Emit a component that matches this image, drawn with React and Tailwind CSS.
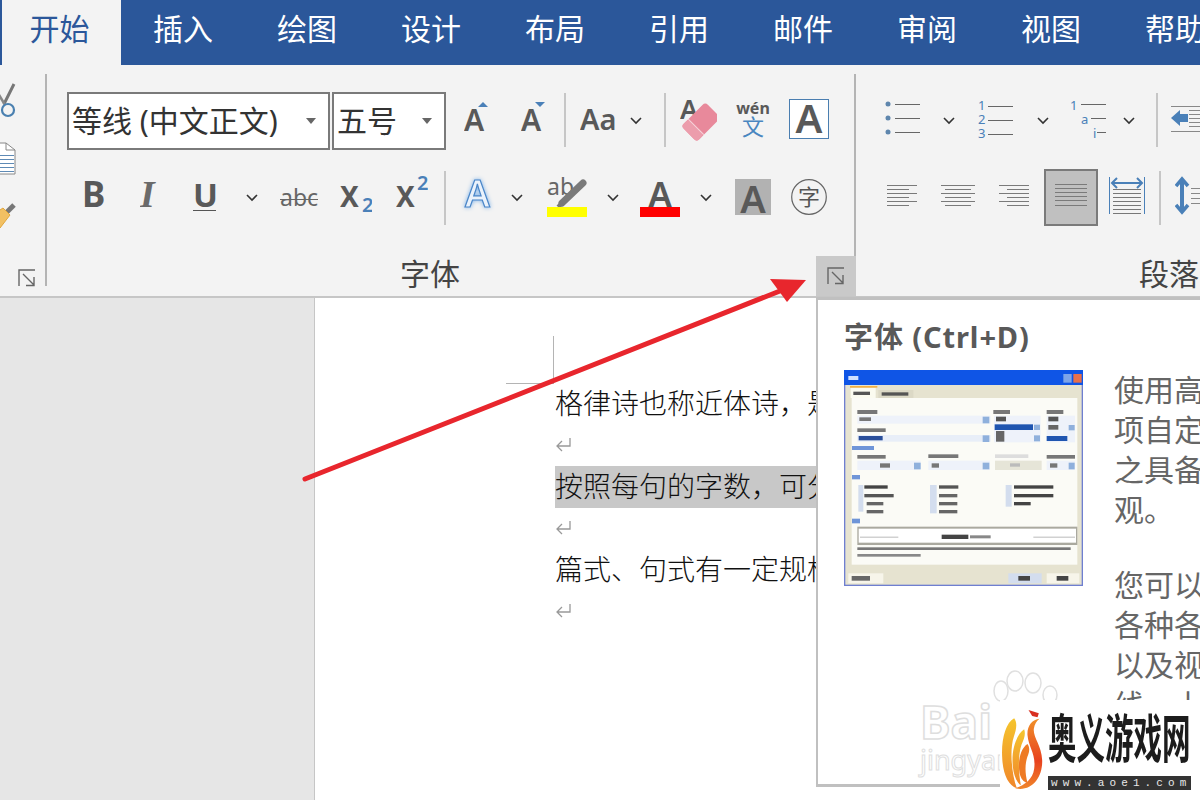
import React from "react";

const TABS = ["插入", "绘图", "设计", "布局", "引用", "邮件", "审阅", "视图", "帮助"];
const GRAY = "#595959";
const BLUE = "#4a80b8";

// thumbnail of the old font dialog, coordinates are in a 717x648 box
const THUMB_RECTS = [
  [42, 30, 717, 648, "#6f7fd0"],
  [46, 34, 709, 640, "#e6e3d0"],
  [42, 30, 717, 45, "#0f55e6"],
  [700, 42, 25, 26, "#7ea4e8"],
  [730, 42, 25, 26, "#e8704a"],
  [55, 48, 30, 12, "#cfe0ff"],
  [62, 84, 75, 30, "#fbfbf0"],
  [60, 78, 82, 5, "#f5b040"],
  [145, 90, 105, 24, "#dcd9c6"],
  [70, 95, 50, 10, "#555"],
  [155, 97, 80, 10, "#555"],
  [65, 114, 677, 500, "#fbfbf6"],
  [82, 150, 60, 12, "#777"],
  [82, 167, 400, 24, "#eef2fa"],
  [88, 172, 35, 11, "#777"],
  [82, 205, 85, 11, "#777"],
  [82, 225, 400, 20, "#e8eef8"],
  [86, 228, 72, 13, "#2a4f9a"],
  [458, 170, 20, 20, "#8fb0dc"],
  [458, 226, 20, 20, "#8fb0dc"],
  [490, 150, 50, 12, "#777"],
  [492, 167, 140, 80, "#eef2fa"],
  [498, 170, 30, 14, "#555"],
  [494, 193, 115, 17, "#1f55b0"],
  [498, 213, 25, 32, "#666"],
  [612, 194, 18, 16, "#8fb0dc"],
  [612, 226, 18, 18, "#8fb0dc"],
  [650, 150, 50, 12, "#777"],
  [650, 167, 85, 80, "#eef2fa"],
  [655, 170, 30, 14, "#555"],
  [655, 195, 30, 14, "#666"],
  [650, 228, 62, 15, "#1f55b0"],
  [716, 195, 18, 16, "#8fb0dc"],
  [66, 258, 66, 12, "#6f95d8"],
  [82, 285, 85, 11, "#777"],
  [82, 302, 190, 28, "#eef2fa"],
  [150, 310, 30, 13, "#777"],
  [252, 308, 20, 20, "#8fb0dc"],
  [295, 283, 90, 11, "#777"],
  [295, 302, 185, 28, "#eef2fa"],
  [305, 310, 22, 13, "#777"],
  [458, 308, 20, 20, "#8fb0dc"],
  [495, 283, 100, 11, "#ddd"],
  [495, 302, 140, 28, "#e6e5d8"],
  [540, 310, 30, 10, "#bbb"],
  [650, 285, 85, 11, "#777"],
  [650, 302, 85, 28, "#eef2fa"],
  [660, 310, 22, 13, "#777"],
  [716, 308, 18, 20, "#8fb0dc"],
  [66, 345, 24, 13, "#6f95d8"],
  [85, 375, 15, 80, "#d3ddee"],
  [103, 376, 70, 10, "#444"],
  [103, 402, 88, 10, "#555"],
  [110, 426, 50, 10, "#666"],
  [110, 450, 50, 10, "#666"],
  [300, 375, 20, 85, "#d3ddee"],
  [327, 376, 58, 10, "#555"],
  [327, 402, 55, 10, "#666"],
  [327, 426, 55, 10, "#666"],
  [327, 450, 55, 10, "#666"],
  [527, 375, 18, 65, "#d3ddee"],
  [552, 376, 118, 10, "#444"],
  [552, 402, 118, 10, "#444"],
  [552, 426, 50, 10, "#444"],
  [66, 476, 24, 14, "#6f95d8"],
  [82, 500, 660, 55, "#aaa99f"],
  [86, 506, 652, 42, "#fff"],
  [90, 530, 115, 3, "#bbb"],
  [610, 530, 125, 3, "#bbb"],
  [335, 524, 80, 13, "#444"],
  [420, 526, 62, 9, "#888"],
  [82, 562, 640, 8, "#777"],
  [82, 582, 190, 8, "#888"],
  [55, 640, 105, 30, "#f7f5ea"],
  [65, 648, 55, 14, "#666"],
  [535, 640, 100, 30, "#d3ddee"],
  [565, 648, 35, 14, "#444"],
  [650, 640, 98, 30, "#f7f5ea"],
  [680, 648, 35, 14, "#444"],
];

function Chevron({ y = 29 }) {
  return (
    <svg width="12" height="60" className="shrink-0 self-start block">
      <path d={`M1 ${y - 3}L6 ${y + 2}L11 ${y - 3}`} fill="none" stroke="#333" strokeWidth="1.6" />
    </svg>
  );
}

function Launcher() {
  return (
    <svg width="18" height="18" viewBox="0 0 18 18" className="block">
      <path d="M1 17V1H17M5 5L16 16M16 8V16.5H8" fill="none" stroke="#666" strokeWidth="1.4" />
    </svg>
  );
}

function Sep({ className }) {
  return <div className={`w-[2px] h-[54px] bg-[#c6c6c6] shrink-0 ${className}`} />;
}

function Combo({ text, className }) {
  return (
    <div className={`h-[58px] border-2 border-[#7a7a7a] bg-white flex items-center justify-between pl-[3px] pr-[12px] text-[30px] leading-none text-[#333] ${className}`}>
      <span className="whitespace-nowrap">{text}</span>
      <span className="w-0 h-0 border-x-[5px] border-x-transparent border-t-[6px] border-t-[#666]" />
    </div>
  );
}

function AlignLines({ w, widths, align, x = 0, ys = [20, 24, 28, 32, 36, 40] }) {
  return ys.map((y, i) => {
    const lw = widths[i % 2];
    const x1 = align === "left" ? x : align === "right" ? x + w - lw : x + (w - lw) / 2;
    return <line key={y} x1={x1} x2={x1 + lw} y1={y + 0.5} y2={y + 0.5} stroke="#7a7a7a" />;
  });
}

function ReturnMark() {
  return (
    <svg width="16" height="16" viewBox="0 0 16 16" className="block">
      <path d="M15 1V9H2M7 4L2 9L7 14" fill="none" stroke="#999" strokeWidth="1.3" />
    </svg>
  );
}

function ClipboardGroup() {
  return (
    <div className="flex w-[47px] shrink-0">
      <div className="w-[45px] flex flex-col overflow-hidden">
        <svg width="45" height="36" className="block mt-[18px]">
          <path d="M14 1L4 21" stroke="#777" strokeWidth="3" fill="none" />
          <path d="M-2 10L5 22" stroke="#888" strokeWidth="2.5" fill="none" />
          <circle cx="8" cy="27" r="6" fill="none" stroke="#4a80b0" strokeWidth="2.2" />
        </svg>
        <svg width="45" height="36" className="block mt-[21px]">
          <path d="M-2 3H6L15 10V34H-2Z" fill="#fff" stroke="#888" />
          <path d="M6 3V10H15" fill="none" stroke="#888" />
          <path d="M0 15.5H14M0 19.5H14M0 23.5H14M0 27.5H14M0 31.5H14" stroke="#5e8ab5" />
        </svg>
        <svg width="45" height="36" className="block mt-[22px]">
          <path d="M6 15L14 7" stroke="#777" strokeWidth="5" />
          <path d="M-6 16L3 10L10 17L0 30Z" fill="#f2c063" stroke="#e0a63c" />
        </svg>
        <div className="ml-[18px] mt-[35px]">
          <Launcher />
        </div>
      </div>
      <div className="w-[2px] h-[212px] mt-[9px] bg-[#b4b4b4]" />
    </div>
  );
}

function FontGroup() {
  return (
    <div className="flex flex-col w-[809px] shrink-0">
      <div className="flex h-[191px]">
        <div className="flex-1 pt-[27px]">
          <div className="flex items-start h-[58px] pl-[20px]">
            <Combo text="等线 (中文正文)" className="w-[263px]" />
            <Combo text="五号" className="w-[114px] ml-[2px]" />
            <svg width="26" height="58" className="block ml-[18px] shrink-0">
              <text x="0" y="39" fontSize="30" fontWeight="600" fill={GRAY}>A</text>
              <path d="M14 15L19 10L24 15Z" fill={BLUE} />
            </svg>
            <svg width="26" height="58" className="block ml-[31px] shrink-0">
              <text x="0" y="39" fontSize="30" fontWeight="600" fill={GRAY}>A</text>
              <path d="M14 10L24 10L19 15Z" fill={BLUE} />
            </svg>
            <Sep className="ml-[17px] mt-[1px]" />
            <svg width="36" height="58" className="block ml-[14px] shrink-0">
              <text x="0" y="38" fontSize="29" fontWeight="600" fill={GRAY}>Aa</text>
            </svg>
            <div className="ml-[14px]"><Chevron /></div>
            <Sep className="ml-[22px] mt-[1px]" />
            <svg width="37" height="58" className="block ml-[14px] shrink-0">
              <text x="0" y="27" fontSize="27" fontWeight="600" fill={GRAY}>A</text>
              <g transform="rotate(-45 21 30)">
                <rect x="4" y="19" width="34" height="22" rx="4" fill="#e8899b" />
                <rect x="4" y="19" width="10" height="22" rx="3" fill="#ec9dac" />
                <line x1="14" x2="14" y1="19" y2="41" stroke="#fff" strokeOpacity="0.6" />
              </g>
            </svg>
            <svg width="36" height="58" className="block ml-[18px] shrink-0">
              <text x="18" y="22" fontSize="16" fontWeight="700" textAnchor="middle" fill={GRAY}>wén</text>
              <text x="18" y="43" fontSize="22" textAnchor="middle" fill="#4a86c0">文</text>
            </svg>
            <svg width="40" height="58" className="block ml-[18px] shrink-0">
              <rect x="0.5" y="7.5" width="39" height="39" fill="#fff" stroke="#4a7eb0" />
              <text x="20" y="41" fontSize="40" fontWeight="600" textAnchor="middle" fill={GRAY}>A</text>
            </svg>
          </div>
          <div className="flex items-start h-[60px] pl-[35px] mt-[15px]">
            <svg width="24" height="60" className="block shrink-0">
              <text x="0" y="42" fontSize="35" fontWeight="700" fill={GRAY}>B</text>
            </svg>
            <svg width="20" height="60" className="block ml-[34px] shrink-0">
              <text x="0" y="42" fontSize="38" fontWeight="700" fontStyle="italic" fontFamily="'Liberation Serif',serif" fill="#6a6a6a">I</text>
            </svg>
            <svg width="24" height="60" className="block ml-[33px] shrink-0">
              <text x="0" y="42" fontSize="33" fontWeight="700" fill={GRAY}>U</text>
              <rect x="0" y="45" width="23" height="1" fill="#555" />
            </svg>
            <div className="ml-[29px]"><Chevron y={33} /></div>
            <svg width="40" height="60" className="block ml-[22px] shrink-0">
              <text x="0" y="41" fontSize="23" fill="#666">abc</text>
              <line x1="0" x2="38" y1="34.5" y2="34.5" stroke="#666" />
            </svg>
            <svg width="32" height="60" className="block ml-[20px] shrink-0">
              <text x="0" y="42" fontSize="28" fontWeight="700" fill={GRAY}>X</text>
              <text x="22" y="47" fontSize="20" fontWeight="600" fill={BLUE}>2</text>
            </svg>
            <svg width="32" height="60" className="block ml-[24px] shrink-0">
              <text x="0" y="42" fontSize="28" fontWeight="700" fill={GRAY}>X</text>
              <text x="21" y="25" fontSize="20" fontWeight="600" fill={BLUE}>2</text>
            </svg>
            <Sep className="ml-[16px] mt-[6px]" />
            <svg width="25" height="60" className="block ml-[19px] shrink-0 overflow-visible drop-shadow-[0_0_2px_#7ab0e8]">
              <text x="0" y="42" fontSize="37" fontWeight="600" fill="#eaf2fb" stroke="#4a86c8" strokeWidth="1.2">A</text>
            </svg>
            <div className="ml-[21px]"><Chevron y={33} /></div>
            <svg width="40" height="60" className="block ml-[24px] shrink-0">
              <text x="0" y="30" fontSize="23" fill="#666">ab</text>
              <line x1="36" y1="18" x2="15" y2="38" stroke="#7a7a7a" strokeWidth="7" strokeLinecap="round" />
              <line x1="15" y1="38" x2="11" y2="42" stroke="#7a7a7a" strokeWidth="4" />
              <rect x="0" y="42" width="40" height="10" fill="#ffff00" />
            </svg>
            <div className="ml-[20px]"><Chevron y={33} /></div>
            <svg width="40" height="60" className="block ml-[21px] shrink-0">
              <text x="20" y="43" fontSize="36" fontWeight="600" textAnchor="middle" fill={GRAY}>A</text>
              <rect x="0" y="42" width="40" height="10" fill="#ff0000" />
            </svg>
            <div className="ml-[20px]"><Chevron y={33} /></div>
            <svg width="36" height="60" className="block ml-[23px] shrink-0">
              <rect x="0" y="14" width="36" height="36" fill="#b2b2b2" />
              <text x="18" y="48" fontSize="38" fontWeight="600" textAnchor="middle" fill={GRAY}>A</text>
            </svg>
            <svg width="36" height="60" className="block ml-[20px] shrink-0">
              <circle cx="18" cy="32" r="17.3" fill="none" stroke="#666" strokeWidth="1.2" />
              <text x="18" y="40" fontSize="22" textAnchor="middle" fill="#555">字</text>
            </svg>
          </div>
        </div>
        <div className="w-[2px] mt-[9px] bg-[#b4b4b4]" />
      </div>
      <div className="flex h-[40px]">
        <div className="ml-[353px] text-[30px] leading-[36px] text-[#444]">字体</div>
        <div className="ml-auto w-[40px] h-[40px] bg-[#c9c9c9] flex items-center justify-center">
          <Launcher />
        </div>
      </div>
    </div>
  );
}

function ParagraphGroup() {
  return (
    <div className="flex flex-col flex-1 overflow-hidden">
      <div className="h-[191px] pt-[27px]">
        <div className="flex items-start h-[58px] pl-[29px]">
          <svg width="36" height="58" className="block shrink-0">
            {[12, 26, 40].map((y) => (
              <g key={y}>
                <circle cx="3" cy={y} r="2.5" fill="#5e86ad" />
                <line x1="10" x2="35" y1={y + 0.5} y2={y + 0.5} stroke="#666" />
              </g>
            ))}
          </svg>
          <div className="ml-[22px]"><Chevron /></div>
          <svg width="36" height="58" className="block ml-[23px] shrink-0">
            {["1", "2", "3"].map((n, i) => (
              <g key={n}>
                <text x="0" y={18 + i * 14} fontSize="13" fill={BLUE}>{n}</text>
                <line x1="10" x2="35" y1={14.5 + i * 14} y2={14.5 + i * 14} stroke="#666" />
              </g>
            ))}
          </svg>
          <div className="ml-[23px]"><Chevron /></div>
          <svg width="36" height="58" className="block ml-[21px] shrink-0">
            <text x="0" y="18" fontSize="13" fill={BLUE}>1</text>
            <line x1="11" x2="36" y1="12.5" y2="12.5" stroke="#666" />
            <text x="11" y="32" fontSize="13" fill={BLUE}>a</text>
            <line x1="21" x2="36" y1="26.5" y2="26.5" stroke="#666" />
            <text x="23" y="46" fontSize="13" fill={BLUE}>i</text>
            <line x1="27" x2="36" y1="40.5" y2="40.5" stroke="#666" />
          </svg>
          <div className="ml-[17px]"><Chevron /></div>
          <Sep className="ml-[21px] mt-[1px]" />
          <svg width="30" height="58" className="block ml-[12px] shrink-0">
            <line x1="1" x2="30" y1="14.5" y2="14.5" stroke="#888" />
            <line x1="1" x2="30" y1="39.5" y2="39.5" stroke="#888" />
            <path d="M1 26L10 18V22H18V30H10V34Z" fill="#4a80b8" />
            <path d="M19 18.5H30M19 22.5H30M19 26.5H30M19 30.5H30M19 34.5H30" stroke="#888" />
          </svg>
        </div>
        <div className="flex items-start h-[60px] pl-[31px] mt-[15px]">
          <svg width="30" height="60" className="block shrink-0">
            <AlignLines w={30} widths={[30, 22]} align="left" />
          </svg>
          <svg width="34" height="60" className="block ml-[24px] shrink-0">
            <AlignLines w={34} widths={[34, 26]} align="center" />
          </svg>
          <svg width="30" height="60" className="block ml-[24px] shrink-0">
            <AlignLines w={30} widths={[30, 22]} align="right" />
          </svg>
          <svg width="54" height="62" className="block ml-[15px] shrink-0">
            <rect x="1" y="5" width="52" height="55" fill="#c0c0c0" stroke="#7a7a7a" strokeWidth="2" />
            <AlignLines w={32} widths={[32, 32]} align="left" x={11} ys={[19, 23, 27, 31, 35, 40]} />
          </svg>
          <svg width="36" height="60" className="block ml-[11px] shrink-0">
            <path d="M0.5 12V49M35.5 12V49" stroke={BLUE} />
            <path d="M3 18H33M8 13L3 18L8 23M28 13L33 18L28 23" fill="none" stroke={BLUE} strokeWidth="2" />
            <path d="M4 24.5H32M4 28.5H32M4 32.5H32M4 36.5H32M4 40.5H32M4 44.5H32M4 48.5H32" stroke="#777" />
          </svg>
          <Sep className="ml-[14px] mt-[6px]" />
          <svg width="25" height="60" className="block ml-[14px] shrink-0">
            <path d="M7 16V46" stroke={BLUE} strokeWidth="4" />
            <path d="M1 21L7 14L13 21M1 40L7 47L13 40" fill="none" stroke={BLUE} strokeWidth="3.5" />
            <path d="M16 23.5H25M16 28.5H25M16 33.5H25M16 38.5H25" stroke="#888" />
          </svg>
        </div>
      </div>
      <div className="h-[40px] pl-[283px] text-[30px] leading-[36px] text-[#444] whitespace-nowrap">段落</div>
    </div>
  );
}

function Tooltip() {
  return (
    <div className="absolute left-[816px] top-[297px] w-[384px] h-[490px] bg-white border-l-2 border-y-[3px] border-[#c0c0c0] pl-[26px] pt-[19px]">
      <div className="text-[29px] leading-[36px] font-bold text-[#595959] whitespace-nowrap tracking-[0.9px]">字体 (Ctrl+D)</div>
      <div className="flex mt-[15px]">
        <svg width="239" height="216" viewBox="42 30 717 648" className="block shrink-0 blur-[0.5px]">
          {THUMB_RECTS.map(([x, y, w, h, fill], i) => (
            <rect key={i} x={x} y={y} width={w} height={h} fill={fill} />
          ))}
        </svg>
        <div className="ml-[31px] h-[333px] overflow-hidden text-[30px] leading-[40px] text-[#666] whitespace-nowrap">
          <div>使用高级</div>
          <div>项自定义</div>
          <div>之具备所</div>
          <div>观。</div>
          <div className="mt-[35px]">您可以选</div>
          <div>各种各样</div>
          <div>以及视觉</div>
          <div>线、上标</div>
        </div>
      </div>
    </div>
  );
}

function Watermark() {
  return (
    <svg width="150" height="120" className="absolute left-[915px] top-[665px]">
      <g fill="#fff" stroke="#e0e0e0" strokeWidth="1.5">
        <ellipse cx="86" cy="26" rx="7" ry="10" />
        <ellipse cx="100" cy="16" rx="8" ry="10" />
        <ellipse cx="118" cy="18" rx="8" ry="10" />
        <ellipse cx="135" cy="30" rx="7" ry="9" />
      </g>
      <text x="5" y="74" fontSize="46" fontWeight="700" fill="#fff" stroke="#dedede" strokeWidth="1.5">Bai</text>
      <text x="5" y="105" fontSize="27" fill="#fff" stroke="#dedede">jingyan</text>
    </svg>
  );
}

function Logo() {
  return (
    <div className="absolute left-[1000px] top-[700px] w-[200px] h-[100px] bg-white flex">
      <svg width="47" height="94" viewBox="300 120 140 282" className="block shrink-0">
        <defs>
          <linearGradient id="feather" x1="0" y1="0" x2="0" y2="1">
            <stop offset="0" stopColor="#f5c52e" />
            <stop offset="1" stopColor="#f0862a" />
          </linearGradient>
          <linearGradient id="body" x1="0" y1="0" x2="0" y2="1">
            <stop offset="0" stopColor="#f0912a" />
            <stop offset="0.6" stopColor="#e8421f" />
            <stop offset="1" stopColor="#f0862a" />
          </linearGradient>
        </defs>
        <path d="M385 150L416 160L412 172L396 168Z" fill="#d93020" />
        <path d="M418 176C396 178 380 198 382 226C385 262 408 282 402 326C398 358 372 376 345 385C395 396 428 352 426 300C424 256 398 232 401 206C403 192 410 182 418 176Z" fill="url(#body)" />
        <path d="M342 175C316 188 303 240 306 292C308 342 324 376 350 385C334 340 328 268 341 230C349 208 352 188 342 175Z" fill="url(#feather)" />
        <path d="M372 208C348 224 333 270 338 320C341 348 350 366 362 376C354 332 354 282 364 254C372 236 377 222 372 208Z" fill="url(#feather)" />
        <path d="M382 252C362 264 352 302 358 338C362 356 370 366 382 368C372 332 376 302 384 284C389 272 388 260 382 252Z" fill="#ee7a24" />
      </svg>
      <div className="ml-[1px] w-[143px]">
        <div className="h-[76px] flex items-center text-[28.5px] leading-none font-bold text-[#1c1c1c] whitespace-nowrap">
          <span className="scale-y-[1.85] origin-center">奥义游戏网</span>
        </div>
        <div className="h-[14px] bg-[#333] text-[11px] leading-[14px] tracking-[5.1px] pl-[3px] text-[#e8e8e8] font-['Liberation_Mono',monospace] whitespace-nowrap overflow-hidden">
          www.aoe1.com
        </div>
      </div>
    </div>
  );
}

export default function App() {
  return (
    <div className="relative w-[1200px] h-[800px] overflow-hidden bg-white font-['Noto_Sans','Noto_Sans_CJK_SC',sans-serif]">
      {/* tab strip */}
      <div className="flex h-[65px] bg-[#2b579a] pl-[2px] text-[30px] overflow-hidden">
        <div className="w-[119px] shrink-0 bg-[#f3f3f3] text-[#2b579a] flex items-center justify-center pb-[8px] pr-[4px]">开始</div>
        {TABS.map((t) => (
          <div key={t} className="w-[124px] shrink-0 text-white flex items-center justify-center pb-[8px]">{t}</div>
        ))}
      </div>

      {/* ribbon */}
      <div className="flex h-[233px] bg-[#f3f3f3] border-b-2 border-[#c6c6c6]">
        <ClipboardGroup />
        <FontGroup />
        <ParagraphGroup />
      </div>

      {/* document */}
      <div className="flex h-[502px]">
        <div className="w-[315px] shrink-0 bg-[#e6e6e6] border-r border-[#c6c6c6]" />
        <div className="relative flex-1 bg-white pl-[240px] pt-[85px] text-[28px] leading-[41.5px] font-light text-[#111] whitespace-nowrap overflow-hidden">
          <div className="absolute left-[238px] top-[38px] w-px h-[48px] bg-[#b4b4b4]" />
          <div className="absolute left-[191px] top-[85px] w-[47px] h-px bg-[#b4b4b4]" />
          <div>格律诗也称近体诗，是中国古典诗歌</div>
          <div className="h-[41.5px] flex items-center"><ReturnMark /></div>
          <div className="bg-[#c8c8c8] w-[262px]">按照每句的字数，可分为五言律诗</div>
          <div className="h-[41.5px] flex items-center"><ReturnMark /></div>
          <div>篇式、句式有一定规格</div>
          <div className="h-[41.5px] flex items-center"><ReturnMark /></div>
        </div>
      </div>

      <Tooltip />
      <Watermark />
      <Logo />

      {/* annotation arrow */}
      <svg width="1200" height="800" className="absolute left-0 top-0 pointer-events-none">
        <path d="M305 479L785 289" stroke="#e8262d" strokeWidth="5" strokeLinecap="round" />
        <path d="M806 280L770 279L787 302Z" fill="#e8262d" />
      </svg>
    </div>
  );
}
